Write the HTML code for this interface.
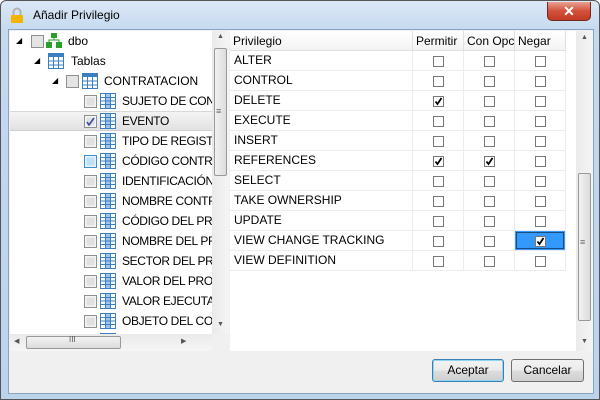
<!DOCTYPE html>
<html><head><meta charset="utf-8">
<style>
*{margin:0;padding:0;box-sizing:border-box}
body{width:600px;height:400px;overflow:hidden;font-family:"Liberation Sans",sans-serif;font-size:12px;color:#000;background:#fff}
.win{position:absolute;left:0;top:0;width:600px;height:400px;border:1px solid #555;border-radius:6px 6px 0 0;background:linear-gradient(#dbe8f6,#c5d9ef 30px,#bcd3ec);}
.title{position:absolute;left:32px;top:7px;font-size:12px;color:#000}
.close{position:absolute;left:546px;top:1px;width:44px;height:19px;border:1px solid #6d2a20;border-top:none;border-radius:0 0 5px 5px;background:linear-gradient(#e8a293,#d2513b 50%,#c23a22);color:#fff;text-align:center;font-weight:bold;font-size:14px;line-height:18px}
.client{position:absolute;left:7px;top:28px;width:586px;height:365px;background:#f0f0f0;border:1px solid #8aa3c0}
.abs{position:absolute}
.tree{left:9px;top:30px;width:202px;height:303px;background:#fff;overflow:hidden}
.vsb{background:linear-gradient(90deg,#eaeaea,#f5f5f5)}
.thumb{position:absolute;border:1px solid #999;border-radius:2px;background:linear-gradient(90deg,#f2f2f2,#dcdcdc)}
.thumbh{position:absolute;border:1px solid #999;border-radius:2px;background:linear-gradient(#f2f2f2,#dcdcdc)}
.row{position:absolute;left:0;height:20px;width:202px;line-height:20px;white-space:nowrap}
.gi{position:absolute;height:20px;line-height:20px;white-space:nowrap}
.tl .gi{letter-spacing:-0.35px}
.grid{left:229px;top:30px;width:346px;height:320px;background:#fff}
.hd{position:absolute;top:0;height:20px;line-height:20px;border-right:1px solid #e0e0e0;border-bottom:1px solid #e0e0e0;background:linear-gradient(#fff,#f3f3f3);padding-left:3px}
.btn{position:absolute;height:23px;border:1px solid #707070;border-radius:3px;background:linear-gradient(#f2f2f2,#ebebeb 50%,#dddddd 51%,#cfcfcf);text-align:center;line-height:21px}
</style></head><body>
<div class="win">
<svg class="abs" style="left:9px;top:6px" width="14" height="17"><path d="M3.5 8V5a3.5 3.5 0 0 1 7 0v3" fill="none" stroke="#b2b2b2" stroke-width="2"/><rect x="1" y="8" width="12" height="8" rx="1" fill="#f4b400"/></svg>
<div class="title">Añadir Privilegio</div>
<div class="close">✕</div>
<div class="client"></div>

<div class="abs tree">
 <div class="row" style="top:0"><span class="abs" style="left:6px;top:0;font-size:8px">◢</span><div class="abs" style="left:21px;top:4px;width:13px;height:13px;border:1px solid #8e8f8f;background:#e4e4e4"></div>
  <svg class="abs" style="left:36px;top:2px" width="16" height="16"><rect x="5" y="0" width="6" height="5" fill="#2a9d2a"/><rect x="0" y="9" width="6" height="6" fill="#2a9d2a"/><rect x="10" y="9" width="6" height="6" fill="#2a9d2a"/><path d="M8 5v2M3 9V7h10v2" stroke="#2a9d2a" fill="none"/></svg>
  <span class="abs" style="left:58px">dbo</span></div>
 <div class="row" style="top:20px"><span class="abs" style="left:24px;font-size:8px">◢</span>
  <svg class="abs" style="left:38px;top:2px" width="16" height="16"><rect x=".5" y=".5" width="15" height="15" fill="#fff" stroke="#3c7fc1"/><rect x="1" y="1" width="14" height="3" fill="#3c7fc1"/><path d="M1 8h14M1 12h14M5.5 4v12M10.5 4v12" stroke="#3c7fc1"/></svg>
  <span class="abs" style="left:61px">Tablas</span></div>
 <div class="row" style="top:40px"><span class="abs" style="left:42px;font-size:8px">◢</span><div class="abs" style="left:56px;top:4px;width:13px;height:13px;border:1px solid #8e8f8f;background:#e4e4e4"></div>
  <svg class="abs" style="left:72px;top:2px" width="16" height="16"><rect x=".5" y=".5" width="15" height="15" fill="#fff" stroke="#3c7fc1"/><rect x="1" y="1" width="14" height="3" fill="#3c7fc1"/><path d="M1 8h14M1 12h14M5.5 4v12M10.5 4v12" stroke="#3c7fc1"/></svg>
  <span class="abs" style="left:94px">CONTRATACION</span></div>
 <div style="position:absolute;left:0;top:80px;width:202px;height:20px;background:linear-gradient(#f4f4f4,#e2e2e2);border-top:1px solid #d8d8d8;border-bottom:1px solid #cfcfcf"></div>
</div>

<div class="abs tl" style="left:9px;top:30px;width:202px;height:303px;overflow:hidden">
<svg width="202" height="303" style="position:absolute;left:0;top:0">
<defs><g id="ic"><rect x=".5" y=".5" width="15" height="15" fill="#fff" stroke="#3c7fc1"/><rect x="6" y="1" width="4" height="14" fill="#9cc6f0"/><path d="M1 4.5h14M1 8h14M1 11.5h14M5.5 1v14M10.5 1v14" stroke="#3c7fc1"/></g>
<g id="cbx"><rect x=".5" y=".5" width="12" height="12" fill="#f4f4f4" stroke="#8e8f8f"/><rect x="2.5" y="2.5" width="8" height="8" fill="#e0e0e0"/></g></defs>
<g transform="translate(74,64)"><use href="#cbx"/></g><g transform="translate(90,62)"><use href="#ic"/></g>
<g transform="translate(74,84)"><use href="#cbx"/><path d="M3 7l2 3 5-7" stroke="#3b4ca0" stroke-width="1.6" fill="none"/></g><g transform="translate(90,82)"><use href="#ic"/></g>
<g transform="translate(74,104)"><use href="#cbx"/></g><g transform="translate(90,102)"><use href="#ic"/></g>
<g transform="translate(74,124)"><rect x=".5" y=".5" width="12" height="12" fill="#e6f3fc" stroke="#3c8fd0"/><rect x="2.5" y="2.5" width="8" height="8" fill="#bfe1f8"/></g><g transform="translate(90,122)"><use href="#ic"/></g>
<g transform="translate(74,144)"><use href="#cbx"/></g><g transform="translate(90,142)"><use href="#ic"/></g>
<g transform="translate(74,164)"><use href="#cbx"/></g><g transform="translate(90,162)"><use href="#ic"/></g>
<g transform="translate(74,184)"><use href="#cbx"/></g><g transform="translate(90,182)"><use href="#ic"/></g>
<g transform="translate(74,204)"><use href="#cbx"/></g><g transform="translate(90,202)"><use href="#ic"/></g>
<g transform="translate(74,224)"><use href="#cbx"/></g><g transform="translate(90,222)"><use href="#ic"/></g>
<g transform="translate(74,244)"><use href="#cbx"/></g><g transform="translate(90,242)"><use href="#ic"/></g>
<g transform="translate(74,264)"><use href="#cbx"/></g><g transform="translate(90,262)"><use href="#ic"/></g>
<g transform="translate(74,284)"><use href="#cbx"/></g><g transform="translate(90,282)"><use href="#ic"/></g>
<g transform="translate(90,302)"><use href="#ic"/></g>
</svg>
<div class="gi" style="left:112px;top:60px">SUJETO DE CONTRATO</div>
<div class="gi" style="left:112px;top:80px">EVENTO</div>
<div class="gi" style="left:112px;top:100px">TIPO DE REGISTRO</div>
<div class="gi" style="left:112px;top:120px">CÓDIGO CONTRATO</div>
<div class="gi" style="left:112px;top:140px">IDENTIFICACIÓN</div>
<div class="gi" style="left:112px;top:160px">NOMBRE CONTRATISTA</div>
<div class="gi" style="left:112px;top:180px">CÓDIGO DEL PROYECTO</div>
<div class="gi" style="left:112px;top:200px">NOMBRE DEL PROYECTO</div>
<div class="gi" style="left:112px;top:220px">SECTOR DEL PROYECTO</div>
<div class="gi" style="left:112px;top:240px">VALOR DEL PROYECTO</div>
<div class="gi" style="left:112px;top:260px">VALOR EJECUTADO</div>
<div class="gi" style="left:112px;top:280px">OBJETO DEL CONTRATO</div>
</div>

<div class="abs vsb" style="left:211px;top:30px;width:17px;height:303px"><span class="abs" style="left:5px;top:2px;font-size:7px;color:#555">▲</span><div class="thumb" style="left:2px;top:17px;width:13px;height:128px"></div><span class="abs" style="left:4px;top:75px;font-size:9px;color:#666">≡</span><span class="abs" style="left:5px;top:290px;font-size:7px;color:#555">▼</span></div>
<div class="abs" style="left:9px;top:333px;width:219px;height:17px;background:linear-gradient(#eaeaea,#f5f5f5)"><span class="abs" style="left:4px;top:3px;font-size:7px;color:#555">◀</span><div class="thumbh" style="left:16px;top:2px;width:95px;height:13px"></div><span class="abs" style="left:59px;top:1px;font-size:8px;color:#555">III</span><span class="abs" style="left:171px;top:3px;font-size:7px;color:#555">▶</span><div class="abs" style="left:202px;top:0;width:17px;height:17px;background:#f0f0f0"></div></div>

<div class="abs grid">
 <div class="hd" style="left:0;width:183px">Privilegio</div>
 <div class="hd" style="left:183px;width:51px">Permitir</div>
 <div class="hd" style="left:234px;width:51px;overflow:hidden;white-space:nowrap">Con Opc</div>
 <div class="hd" style="left:285px;width:51px">Negar</div>
</div>
<div class="abs" style="left:229px;top:50px;width:336px;height:220px">
 <svg width="336" height="220" style="position:absolute;left:0;top:0">
  <g stroke="#ececec"><path d="M0 19.5h336M0 39.5h336M0 59.5h336M0 79.5h336M0 99.5h336M0 119.5h336M0 139.5h336M0 159.5h336M0 179.5h336M0 199.5h336M0 219.5h336M182.5 0v220M233.5 0v220M284.5 0v220M335.5 0v220"/></g>
  <rect x="285" y="180" width="50" height="19" fill="#3399ff"/><rect x="286.5" y="181.5" width="47" height="16" fill="none" stroke="#000" stroke-dasharray="1,1"/>
  <defs><g id="b"><rect x=".5" y=".5" width="10" height="10" fill="#fff" stroke="#777"/></g><path id="k" d="M2.5 5.5l2 2.5 4-6" stroke="#000" stroke-width="1.8" fill="none"/></defs>
 </svg>
 <svg width="336" height="220" style="position:absolute;left:0;top:0">
  <g transform="translate(203,5)"><use href="#b"/></g><g transform="translate(254,5)"><use href="#b"/></g><g transform="translate(305,5)"><use href="#b"/></g>
  <g transform="translate(203,25)"><use href="#b"/></g><g transform="translate(254,25)"><use href="#b"/></g><g transform="translate(305,25)"><use href="#b"/></g>
  <g transform="translate(203,45)"><use href="#b"/><use href="#k"/></g><g transform="translate(254,45)"><use href="#b"/></g><g transform="translate(305,45)"><use href="#b"/></g>
  <g transform="translate(203,65)"><use href="#b"/></g><g transform="translate(254,65)"><use href="#b"/></g><g transform="translate(305,65)"><use href="#b"/></g>
  <g transform="translate(203,85)"><use href="#b"/></g><g transform="translate(254,85)"><use href="#b"/></g><g transform="translate(305,85)"><use href="#b"/></g>
  <g transform="translate(203,105)"><use href="#b"/><use href="#k"/></g><g transform="translate(254,105)"><use href="#b"/><use href="#k"/></g><g transform="translate(305,105)"><use href="#b"/></g>
  <g transform="translate(203,125)"><use href="#b"/></g><g transform="translate(254,125)"><use href="#b"/></g><g transform="translate(305,125)"><use href="#b"/></g>
  <g transform="translate(203,145)"><use href="#b"/></g><g transform="translate(254,145)"><use href="#b"/></g><g transform="translate(305,145)"><use href="#b"/></g>
  <g transform="translate(203,165)"><use href="#b"/></g><g transform="translate(254,165)"><use href="#b"/></g><g transform="translate(305,165)"><use href="#b"/></g>
  <g transform="translate(203,185)"><use href="#b"/></g><g transform="translate(254,185)"><use href="#b"/></g><g transform="translate(305,185)"><use href="#b"/><use href="#k"/></g>
  <g transform="translate(203,205)"><use href="#b"/></g><g transform="translate(254,205)"><use href="#b"/></g><g transform="translate(305,205)"><use href="#b"/></g>
 </svg>
 <div class="gi" style="left:4px;top:-1px">ALTER</div>
 <div class="gi" style="left:4px;top:19px">CONTROL</div>
 <div class="gi" style="left:4px;top:39px">DELETE</div>
 <div class="gi" style="left:4px;top:59px">EXECUTE</div>
 <div class="gi" style="left:4px;top:79px">INSERT</div>
 <div class="gi" style="left:4px;top:99px">REFERENCES</div>
 <div class="gi" style="left:4px;top:119px">SELECT</div>
 <div class="gi" style="left:4px;top:139px">TAKE OWNERSHIP</div>
 <div class="gi" style="left:4px;top:159px">UPDATE</div>
 <div class="gi" style="left:4px;top:179px">VIEW CHANGE TRACKING</div>
 <div class="gi" style="left:4px;top:199px">VIEW DEFINITION</div>
</div>
<div class="abs vsb" style="left:575px;top:30px;width:17px;height:320px"><span class="abs" style="left:5px;top:3px;font-size:7px;color:#555">▲</span><div class="thumb" style="left:2px;top:142px;width:13px;height:148px"></div><span class="abs" style="left:4px;top:206px;font-size:9px;color:#666">≡</span><span class="abs" style="left:5px;top:307px;font-size:7px;color:#555">▼</span></div>

<div class="btn" style="left:431px;top:358px;width:72px;border-color:#3c7fb1;box-shadow:inset 0 0 0 1px #8fd6f5">Aceptar</div>
<div class="btn" style="left:510px;top:358px;width:73px">Cancelar</div>
</div>
</body></html>
